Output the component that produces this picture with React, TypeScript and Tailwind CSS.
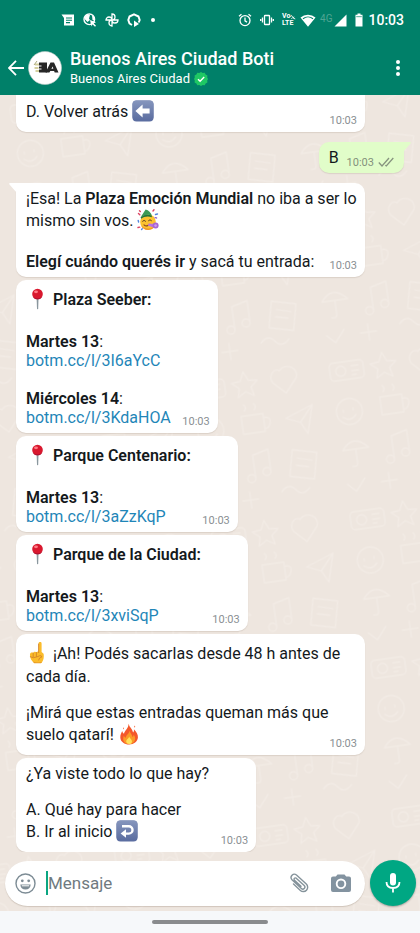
import type { ReactNode } from "react";

const TIME = "10:03";

function ArrowKey({ back = false }: { back?: boolean }) {
  return (
    <svg viewBox="0 0 22 22" className="mb-1 inline-block size-[22px] align-middle" aria-hidden="true">
      <defs>
        <linearGradient id="key" x1="0" y1="0" x2="0" y2="1">
          <stop offset="0" stopColor="#8696bd" />
          <stop offset="1" stopColor="#5b6da0" />
        </linearGradient>
      </defs>
      <rect x="0.5" y="0.5" width="21" height="21" rx="4" fill="#5d6fa2" />
      <rect x="0.5" y="0.5" width="21" height="20" rx="4" fill="url(#key)" />
      {back ? (
        <g>
          <path d="M6 6.200h6.800a3.700 3.700 0 0 1 0 7.400H9" fill="none" stroke="#fff" strokeWidth="2.400" />
          <path d="M10 9.200v8.600L4.600 13.500z" fill="#fff" />
        </g>
      ) : (
        <path d="M3.400 11 10.600 4.600v4h7v4.800h-7v4z" fill="#fff" />
      )}
    </svg>
  );
}

function Pin() {
  return (
    <svg viewBox="0 0 23 22" className="mb-1 inline-block h-[22px] w-[23px] align-middle" aria-hidden="true">
      <path d="M10.600 10h1.900l-.3 10.400-.6 1.100-.6-1.100z" fill="#8a979e" />
      <circle cx="11.500" cy="6" r="5.300" fill="#d9182e" />
      <path d="M6.800 8.400a5.300 5.300 0 0 0 9.500 0 7 7 0 0 1-9.500 0z" fill="#ad1230" />
      <ellipse cx="10" cy="3.800" rx="2" ry="1.400" fill="#ff7b86" />
    </svg>
  );
}

function PartyFace() {
  return (
    <svg viewBox="0 0 22 22" className="mb-1 inline-block size-[22px] align-middle" aria-hidden="true">
      <circle cx="11" cy="13" r="7.800" fill="#fcc22f" />
      <path d="M4 16.500a7.800 7.800 0 0 0 14.500-1c-2 4-9 6-14.500 1z" fill="#f2962a" />
      <path d="M3.600 8.200 8.600.6c3 .8 5.400 3 6.300 6C12 5 7 5.600 3.600 8.200z" fill="#3c9a55" />
      <path d="M3.600 8.200C7 5.400 12 5 15 6.700l-.3 1.500C11 6.800 7 7.500 4.200 9.700z" fill="#24753f" />
      <path d="M5.600 12.200q1.500-2 3 0M11.500 11.600q1.500-2 3 0" fill="none" stroke="#5f4023" strokeWidth="1" strokeLinecap="round" />
      <path d="M7 15.800q2 2 4.200.4" fill="none" stroke="#8a4a20" strokeWidth="1.100" strokeLinecap="round" />
      <path d="M11.400 14.600l5.400.5-.3 3.400-5.300-1.700z" fill="#bd72df" />
      <circle cx="18.600" cy="16.600" r="3" fill="#a865d4" />
      <circle cx="18.600" cy="16.600" r="1.300" fill="#cb9bea" />
      <path d="M1.500 4.500l1.300 1.300M1 18.500l1.700-.4M16 2l1-1.200M2.500 1.800l.8.8" stroke="#db4463" strokeWidth="1.400" strokeLinecap="round" />
      <path d="M18.500 5.500l2-.5M1.200 11.500l.4 1.500M4.500 20.500l.8-.8" stroke="#5386dd" strokeWidth="1.400" strokeLinecap="round" />
      <path d="M17.500 9q1.500-1 2.500.3" fill="none" stroke="#8c5bc8" strokeWidth="1.200" />
    </svg>
  );
}

function PointUp() {
  return (
    <svg viewBox="0 0 23 22" className="mb-1 inline-block h-[22px] w-[23px] align-middle" aria-hidden="true">
      <path d="M12.600 1.400a1.500 1.500 0 0 1 3 0V10l2 1.800c.7 4.500-.6 7.300-2.200 9.200H8C5.500 19 3.800 16 4 12.500c.1-1.900 2-2.400 3.200-1.500.6-1.500 2.400-1.600 3.200-.6.5-.8 1.500-1 2.200-.8z" fill="#fbbc2c" />
      <path d="M12.600 2v8.600M7.200 11v3.800M10.400 10.400v4.200M4.300 14.800q3 1.800 6.300.2l3-1.200q2-.6 2.200 1.200-2.800.4-3.200 3" fill="none" stroke="#d4842a" strokeWidth="0.900" strokeLinecap="round" strokeLinejoin="round" />
      <path d="M7 19.500q4 1.500 8.800.6l-.8 1.100H8.200z" fill="#e79a28" />
    </svg>
  );
}

function Fire() {
  return (
    <svg viewBox="0 0 22 22" className="mb-1 inline-block size-[22px] align-middle" aria-hidden="true">
      <path d="M10.500.8c1 3.700 3.800 5 4.600 8.700.9-.9 1-2 .8-3.300 2.600 2.500 4.200 5.200 4 8.300-.3 4.200-4 6.900-8.700 6.900s-8.800-2.700-8.900-7C2.200 11.800 3.300 10 4.200 8c.4 1.400.9 2.300 1.800 2.800C6.600 7.600 10.800 5 10.500.8z" fill="#f4582b" />
      <path d="M11.600 7.500c.3 2.600 2.600 4 2.800 6.600.8-.5 1.200-1.300 1.300-2.400 1.800 2.300 2 4.600.6 6.700-1.100 1.700-3 2.600-5.200 2.600-2.600 0-5-1.200-5.700-3.600-.4-1.500-.1-3.200.5-4.600.4 1.100 1 1.700 1.900 2 .2-3 3.600-4 3.800-7.300z" fill="#fb9a27" />
      <path d="M11.300 13.500c0 1.800 2.700 2.600 2.700 4.900 0 1.600-1.200 2.600-2.800 2.600s-3-1-3-2.700c0-2 2.500-2.500 3.100-4.800z" fill="#ffe25a" />
      <path d="M5.200 4.200q1 1 .5 2.300-1.200-.9-.5-2.300zM16.500 2.500q1.200 1 .4 2.300-1.200-.9-.4-2.300z" fill="#f4582b" />
    </svg>
  );
}

function Wallpaper() {
  return (
    <svg className="absolute inset-0 size-full" aria-hidden="true">
      <defs>
        <pattern id="doodles" width="140" height="150" patternUnits="userSpaceOnUse" patternTransform="rotate(-8)">
          <g fill="none" stroke="#f2ebe5" strokeWidth="1.300" strokeLinecap="round" strokeLinejoin="round">
            <rect x="8" y="12" width="34" height="18" rx="4" />
            <circle cx="19" cy="21" r="5" />
            <path d="M30 17h7M30 22h7M30 26h4" />
            <path d="M62 8l4 9 9 1-7 6 2 9-8-5-8 5 2-9-7-6 9-1z" />
            <path d="M98 12c8-8 20 0 16 9l-12 14-12-12c-4-8 4-15 8-11z" />
            <circle cx="22" cy="62" r="13" />
            <path d="M16 60v2M26 59v2M15 67q7 6 13-1" />
            <path d="M54 52h22v18H54zM76 56q8 0 6 6t-6 5M58 47q3-3 0-6M68 47q3-3 0-6" />
            <path d="M98 60l28-10-8 28-6-12zM112 66l14-16" />
            <path d="M10 100q12-16 26 0zM23 100v14q0 4-5 3" />
            <path d="M60 92v22M60 92l16-4v20" />
            <circle cx="56" cy="115" r="4" />
            <circle cx="72" cy="110" r="4" />
            <path d="M100 92l24 6-6 26-24-6zM104 101l14 4M102 108l12 3" />
            <path d="M44 136h16M52 128v16M84 132q8-8 14 0t14 0M10 134l8 8 10-12" />
          </g>
        </pattern>
      </defs>
      <rect width="100%" height="100%" fill="url(#doodles)" />
    </svg>
  );
}

const lineHeight = {
  text: "h-[19px] leading-[19px]",
  gap: "h-[17px]",
  emoji: "h-[25px] leading-[25px]",
  lead: "h-[27px] leading-[27px]",
  last: "h-[27px] leading-[25px]",
};

type LineProps = { children?: ReactNode; size?: keyof typeof lineHeight };

function Line({ children, size = "text" }: LineProps) {
  return <p className={`whitespace-nowrap ${lineHeight[size]}`}>{children}</p>;
}

type BubbleProps = { children: ReactNode; wide?: boolean; tail?: boolean; cut?: boolean };

function Bubble({ children, wide, tail, cut }: BubbleProps) {
  return (
    <article
      className={`relative grid bg-white pr-2 pb-1.5 pl-[10px] shadow-[0_1px_1px_rgba(120,100,80,0.16)] ${
        wide ? "mr-[55px] self-stretch" : "self-start"
      } ${cut ? "rounded-b-[10px] pt-1" : "rounded-[10px] pt-1.5"} ${tail ? "rounded-tl-none" : ""}`}
    >
      {tail && (
        <svg viewBox="0 0 8 10" className="absolute top-0 -left-[7px] h-[10px] w-2" aria-hidden="true">
          <path d="M8 0H1Q-.5.300.700 1.800L8 10z" fill="#fff" />
        </svg>
      )}
      <div className={`col-start-1 row-start-1 ${wide ? "" : "pr-[39px]"}`}>{children}</div>
      <time className="col-start-1 row-start-1 self-end justify-self-end text-[11px] leading-none text-[#8a8f93]">
        {TIME}
      </time>
    </article>
  );
}

function BotLink({ path }: { path: string }) {
  return (
    <a href={`https://botm.cc/l/${path}`} className="text-[#1f86b8]">
      botm.cc/l/{path}
    </a>
  );
}

function StatusBar() {
  return (
    <div className="flex h-10 items-center pr-4 pl-[61px] text-white">
      <div className="flex items-center gap-2">
        <svg viewBox="0 0 14 14" className="size-[14px]" aria-hidden="true">
          <path d="M.500 1.500H13v11H3V5z" fill="#fff" />
          <path d="M5 5h6M5 7.300h6M5 9.600h4" stroke="#008069" strokeWidth="1.100" />
        </svg>
        <svg viewBox="0 0 14 14" className="size-[14px]" aria-hidden="true">
          <circle cx="6.300" cy="6.300" r="5.300" fill="none" stroke="#fff" strokeWidth="1.400" />
          <path d="M1.500 4 4 1.500 7 2 6 5.500 7 7 4.500 9 2 6.500zM9 2l3 2.500v3L9.500 7z" fill="#fff" />
          <path d="M7 7l6 2.300-2.300 1 2.300 2.500-1 1-2.500-2.500-1 2.200z" fill="#fff" />
        </svg>
        <svg viewBox="0 0 14 14" className="size-[14px]" fill="none" stroke="#fff" strokeWidth="1.300" aria-hidden="true">
          <path d="M7 7V1a3 3 0 0 1 0 6zM7 7h6a3 3 0 0 1-6 0zM7 7v6a3 3 0 0 1 0-6zM7 7H1a3 3 0 0 1 6 0z" />
        </svg>
        <svg viewBox="0 0 14 14" className="size-[14px]" aria-hidden="true">
          <path d="M5 12 2.500 10.500 1.300 7l1.200-3.500L7 1.300l4.500 2.200L12.700 7l-1 2.500" fill="none" stroke="#fff" strokeWidth="2" strokeLinejoin="round" />
          <path d="M7 7.500 12 11l-5 3z" fill="#fff" />
        </svg>
        <span className="ml-0.5 size-1 rounded-full bg-white" />
      </div>
      <div className="ml-auto flex items-center">
        <svg viewBox="0 0 14 14" className="mr-2 size-[14px]" fill="none" stroke="#fff" strokeWidth="1.300" aria-hidden="true">
          <circle cx="7" cy="7.600" r="5" />
          <path d="M7 4.500v3.300l2 1.300M1 3.300l2.500-2M13 3.300l-2.500-2" />
        </svg>
        <svg viewBox="0 0 14 14" className="mr-2 size-[14px]" fill="none" stroke="#fff" strokeWidth="1.300" aria-hidden="true">
          <rect x="4.500" y="2.500" width="5" height="9" rx="0.600" />
          <path d="M2.500 4.500v5M11.500 4.500v5M.7 6v2M13.300 6v2" />
        </svg>
        <div className="mr-1 w-[14px] text-[7px] leading-[7px] font-bold">
          <div className="flex items-center">
            Vo
            <svg viewBox="0 0 6 6" className="size-1.5" fill="none" stroke="#fff" strokeWidth="1" aria-hidden="true">
              <path d="M.500 2.500q1.500-2 2 0t2 .5M1.500 5q1.500-2.500 2.500-.5l1.600.5" />
            </svg>
          </div>
          LTE
        </div>
        <svg viewBox="0 0 16 13" className="mr-1 h-[13px] w-4" aria-hidden="true">
          <path d="M.500 3.600a11 11 0 0 1 15 0L8 12.700z" fill="#fff" />
          <path d="M3 4.700a8 8 0 0 1 10 0" fill="none" stroke="#008069" strokeWidth="1.100" />
        </svg>
        <span className="mr-0.5 self-start text-[10px] leading-3 text-[#4fa593]">4G</span>
        <svg viewBox="0 0 13 13" className="mr-2 size-[13px]" aria-hidden="true">
          <path d="M12.500.500v12H.500z" fill="#fff" />
        </svg>
        <svg viewBox="0 0 8 14" className="mr-[5px] h-[14px] w-2" aria-hidden="true">
          <path d="M2.500.500h3v1.300h2V13.500H.500V1.800h2z" fill="#fff" />
          <path d="M1.200 3.600h5.600" stroke="#73b9aa" strokeWidth="1.200" />
        </svg>
        <time className="text-sm leading-none font-medium">{TIME}</time>
      </div>
    </div>
  );
}

function Header() {
  return (
    <header className="relative z-10 shrink-0 bg-[#008069] text-white">
      <StatusBar />
      <div className="flex h-[55px] items-center pr-[10px] pl-2">
        <button type="button" aria-label="Atrás" className="size-4">
          <svg viewBox="0 0 16 16" fill="none" stroke="#fff" strokeWidth="1.800" aria-hidden="true">
            <path d="M8 .8.900 8 8 15.200M1 8h15" />
          </svg>
        </button>
        <svg viewBox="0 0 34 34" className="ml-1 size-[34px] shrink-0" aria-hidden="true">
          <circle cx="17" cy="17" r="16.500" fill="#fff" stroke="#b9c9c4" strokeWidth="0.600" />
          <path d="M7 13.500h4M6.500 17h4M7.500 20h4" stroke="#d3cf9e" strokeWidth="1.800" />
          <path d="M6 14l3-4" stroke="#a9a77d" strokeWidth="1" />
          <path d="M11 11.500h8v10H11v-3h2.500v-1H11v-2h2.500v-1H11z" fill="#272727" />
          <path d="M17.500 21.500 22.500 11.500h3.500l4.500 10h-3.800l-.6-1.500h-3.800l-.9 1.500z" fill="#272727" />
          <path d="M23.300 17.800h2L24.800 15.500z" fill="#fff" />
        </svg>
        <div className="ml-2 min-w-0 flex-1">
          <h1 className="truncate text-lg leading-[22px] font-medium">Buenos Aires Ciudad Boti</h1>
          <p className="flex items-center gap-1 text-[13px] leading-[18px]">
            Buenos Aires Ciudad
            <svg viewBox="0 0 14 14" className="size-[14px]" aria-hidden="true">
              <path d="M7 0l1.700 1 2-.2.900 1.800 1.800 1-.2 1.900L14 7l-.8 1.600.2 2-1.800.9-.9 1.800-2-.3L7 14l-1.700-1-2 .3-.9-1.800-1.800-.9.200-2L0 7l.8-1.500-.2-1.900 1.800-1 .9-1.800 2 .2z" fill="#1fc764" />
              <path d="M4 7.200l2.100 2.100L10.200 5" fill="none" stroke="#fff" strokeWidth="1.400" />
            </svg>
          </p>
        </div>
        <button type="button" aria-label="Más opciones" className="flex w-6 flex-col items-center gap-0.5">
          <span className="size-1 rounded-full bg-white" />
          <span className="size-1 rounded-full bg-white" />
          <span className="size-1 rounded-full bg-white" />
        </button>
      </div>
    </header>
  );
}

function Reply() {
  return (
    <article className="relative my-[7px] mr-4 flex h-8 items-start self-end rounded-[10px] rounded-tr-none bg-[#e1fdc9] px-[10px] shadow-[0_1px_1px_rgba(120,100,80,0.16)]">
      <svg viewBox="0 0 8 10" className="absolute top-0 -right-[7px] h-[10px] w-2" aria-hidden="true">
        <path d="M0 0h7q1.500.300.300 1.800L0 10z" fill="#e1fdc9" />
      </svg>
      <p className="mt-1.5 leading-[19px]">B</p>
      <time className="mt-[15px] ml-2 text-[11px] leading-none text-[#84917c]">{TIME}</time>
      <svg viewBox="0 0 16 10" className="mt-[15px] ml-1 h-[10px] w-4" fill="none" stroke="#87947f" strokeWidth="1.300" aria-hidden="true">
        <path d="M.800 5.500 4 9l7-8M7.300 8.300 8.300 9l7-8" />
      </svg>
    </article>
  );
}

function Composer() {
  return (
    <form className="relative flex shrink-0 items-center gap-[5px] px-1 pt-2 pb-[5px]" onSubmit={(e) => e.preventDefault()}>
      <div className="ml-px flex h-[45px] min-w-0 flex-1 items-center rounded-full bg-white pr-[14px] pl-[10px] shadow-[0_1px_1px_rgba(120,100,80,0.25)]">
        <button type="button" aria-label="Emojis" className="size-[21px] shrink-0">
          <svg viewBox="0 0 21 21" aria-hidden="true">
            <circle cx="10.500" cy="10.500" r="9.500" fill="none" stroke="#7d8c95" strokeWidth="1.400" />
            <circle cx="7.300" cy="7.800" r="1.400" fill="#7d8c95" />
            <circle cx="13.700" cy="7.800" r="1.400" fill="#7d8c95" />
            <path d="M5.300 11.500h10.400q-.5 5-5.200 5t-5.200-5z" fill="#7d8c95" />
            <path d="M6.800 12.800h7.400" stroke="#fff" strokeWidth="1" />
          </svg>
        </button>
        <input
          type="text"
          aria-label="Mensaje"
          placeholder="Mensaje"
          className="ml-[10px] h-6 min-w-0 flex-1 border-l-2 border-[#0aa681] text-[17px] leading-6 outline-none placeholder:text-[#6f7a80]"
        />
        <button type="button" aria-label="Adjuntar" className="mr-[22px] size-5 shrink-0">
          <svg viewBox="0 0 20 20" fill="none" stroke="#85939b" strokeWidth="1.400" strokeLinecap="round" aria-hidden="true">
            <path d="M7.200 5.200l8 7.400a2 2 0 0 1-2.800 2.900L3 6.800A3.300 3.300 0 0 1 7.500 2l9.800 9.100a4.300 4.300 0 0 1-5.900 6.300L4.500 11M7.200 5.200a1.300 1.300 0 0 0-1.700 2l6.500 6" />
          </svg>
        </button>
        <button type="button" aria-label="Cámara" className="size-5 shrink-0">
          <svg viewBox="0 0 20 20" aria-hidden="true">
            <path d="M6.500 1.500h7l1.700 2H18q2 0 2 2V17q0 2-2 2H2q-2 0-2-2V5.500q0-2 2-2h2.800z" fill="#8393a0" />
            <circle cx="10" cy="10.800" r="4.300" fill="#8393a0" stroke="#fff" strokeWidth="1.900" />
          </svg>
        </button>
      </div>
      <button type="button" aria-label="Grabar mensaje de voz" className="flex size-[46px] shrink-0 items-center justify-center rounded-full bg-[#00a783] shadow-[0_1px_2px_rgba(0,0,0,0.3)]">
        <svg viewBox="0 0 16 20" className="h-5 w-4" aria-hidden="true">
          <rect x="5" y="0" width="6" height="12.500" rx="3" fill="#fff" />
          <path d="M1.500 9q0 6 6.500 6t6.500-6M8 15v4.500" fill="none" stroke="#fff" strokeWidth="1.800" />
        </svg>
      </button>
    </form>
  );
}

export default function App() {
  return (
    <div className="flex h-screen flex-col overflow-hidden bg-[#f6f8fa] font-[Roboto,sans-serif] text-base text-[#14191c]">
      <Header />
      <div className="relative flex min-h-0 flex-1 flex-col bg-[#eee6df]">
        <Wallpaper />
        <main className="relative flex min-h-0 flex-1 flex-col justify-end gap-[3px] overflow-hidden pl-4">
          <Bubble wide cut>
            <Line size="last">
              D. Volver atrás <ArrowKey />
            </Line>
          </Bubble>
          <Reply />
          <Bubble wide tail>
            <Line>
              ¡Esa! La <b className="font-semibold">Plaza Emoción Mundial</b> no iba a ser lo
            </Line>
            <Line size="emoji">
              mismo sin vos. <PartyFace />
            </Line>
            <Line />
            <Line>
              <b className="font-semibold">Elegí cuándo querés ir</b> y sacá tu entrada:
            </Line>
          </Bubble>
          <Bubble>
            <Line size="lead">
              <Pin /> <b className="font-semibold">Plaza Seeber:</b>
            </Line>
            <Line />
            <Line>
              <b className="font-semibold">Martes 13</b>:
            </Line>
            <Line>
              <BotLink path="3I6aYcC" />
            </Line>
            <Line />
            <Line>
              <b className="font-semibold">Miércoles 14</b>:
            </Line>
            <Line>
              <BotLink path="3KdaHOA" />
            </Line>
          </Bubble>
          <Bubble>
            <Line size="lead">
              <Pin /> <b className="font-semibold">Parque Centenario:</b>
            </Line>
            <Line />
            <Line>
              <b className="font-semibold">Martes 13</b>:
            </Line>
            <Line>
              <BotLink path="3aZzKqP" />
            </Line>
          </Bubble>
          <Bubble>
            <Line size="lead">
              <Pin /> <b className="font-semibold">Parque de la Ciudad:</b>
            </Line>
            <Line />
            <Line>
              <b className="font-semibold">Martes 13</b>:
            </Line>
            <Line>
              <BotLink path="3xviSqP" />
            </Line>
          </Bubble>
          <Bubble wide>
            <Line size="lead">
              <PointUp /> ¡Ah! Podés sacarlas desde 48 h antes de
            </Line>
            <Line>cada día.</Line>
            <Line size="gap" />
            <Line>¡Mirá que estas entradas queman más que</Line>
            <Line size="last">
              suelo qatarí! <Fire />
            </Line>
          </Bubble>
          <Bubble>
            <Line>¿Ya viste todo lo que hay?</Line>
            <Line size="gap" />
            <Line>A. Qué hay para hacer</Line>
            <Line size="last">
              B. Ir al inicio <ArrowKey back />
            </Line>
          </Bubble>
        </main>
        <Composer />
      </div>
      <div className="flex h-[22px] shrink-0 items-center justify-center">
        <span className="h-1 w-[116px] rounded-sm bg-[#898b8d]" />
      </div>
    </div>
  );
}
